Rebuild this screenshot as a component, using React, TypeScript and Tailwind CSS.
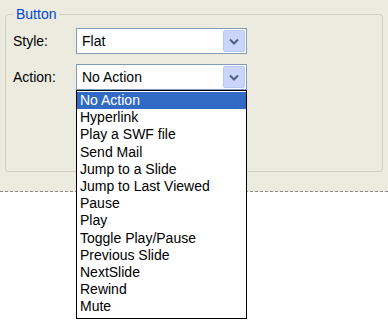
const actions = [
  "No Action",
  "Hyperlink",
  "Play a SWF file",
  "Send Mail",
  "Jump to a Slide",
  "Jump to Last Viewed",
  "Pause",
  "Play",
  "Toggle Play/Pause",
  "Previous Slide",
  "NextSlide",
  "Rewind",
  "Mute",
];

function DropButton() {
  return (
    <div className="absolute top-px right-px bottom-px flex w-[22px] items-center justify-center rounded-[2px] border border-[#b7c8f2] bg-[#c9d5fa]">
      <svg width="10" height="7" viewBox="0 0 10 7">
        <polyline
          points="1,1.5 5,5.5 9,1.5"
          fill="none"
          stroke="#4d6185"
          strokeWidth="2"
        />
      </svg>
    </div>
  );
}

function Select({ value, open }: { value: string; open?: boolean }) {
  return (
    <div className="relative h-[26px] w-[171px] border border-[#7f9db9] bg-white">
      <div className="pl-[5px] leading-[24px]">{value}</div>
      <DropButton />
      {open && (
        <ul className="absolute top-[25px] left-[-1px] z-10 w-[171px] border border-black bg-white pt-px pb-[2px]">
          {actions.map((action, i) => (
            <li
              key={action}
              className={
                i === 0
                  ? "bg-[#316ac5] pl-[3px] leading-[17.2px] text-white"
                  : "pl-[3px] leading-[17.2px]"
              }
            >
              {action}
            </li>
          ))}
        </ul>
      )}
    </div>
  );
}

export default function App() {
  return (
    <div className="h-[321px] w-[388px] overflow-hidden bg-white font-['Liberation_Sans',Arial,sans-serif] text-[14px] text-black">
      <div className="h-[192px] border-b border-dashed border-[#8a8a8a] bg-[#ecebe0] pt-[6px]">
        <fieldset className="mx-[5px] h-[166px] rounded-[3px] border border-[#d0d0bf] p-0">
          <legend className="ml-[7px] px-[3px] leading-[16px] text-[#0046d5]">
            Button
          </legend>
          <div className="flex flex-col gap-[10px] pt-[6px] pl-[7px]">
            <div className="flex items-center">
              <span className="w-[63px]">Style:</span>
              <Select value="Flat" />
            </div>
            <div className="flex items-center">
              <span className="w-[63px]">Action:</span>
              <Select value="No Action" open />
            </div>
          </div>
        </fieldset>
      </div>
    </div>
  );
}
